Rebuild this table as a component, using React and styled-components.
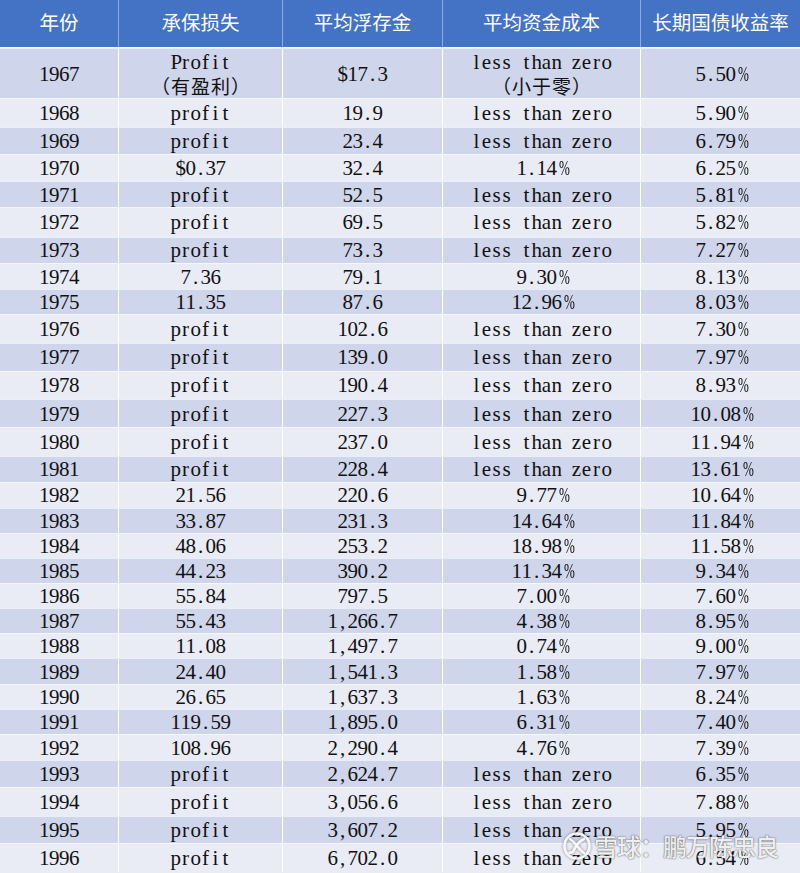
import React from 'react'
import styled, { createGlobalStyle } from 'styled-components';

const GlobalStyle = createGlobalStyle`
  * { box-sizing: border-box; }
  body {
    margin: 0;
    background: #e9ebf5;
    font-family: "Liberation Serif", "Times New Roman", serif;
  }
`;

const COLS = '118px 164px 160px 198px 160px';

const Table = styled.div`
  position: relative;
  width: 800px;
  height: 873px;
  overflow: hidden;
`;

const HeadRow = styled.div`
  display: grid;
  grid-template-columns: ${COLS};
  height: 48px;
  background: #4472c4;
  border-bottom: 1.5px solid #ffffff;
`;

const HeadCell = styled.div`
  display: flex;
  align-items: center;
  justify-content: center;
  padding-bottom: 5px;
  color: #ffffff;
  font-family: "Noto Sans CJK SC", sans-serif;
  font-size: 19.5px;
  border-left: ${p => (p.$first ? 'none' : '1px solid #8fa9dc')};
`;

const Row = styled.div`
  display: grid;
  grid-template-columns: ${COLS};
  height: ${p => p.$h}px;
  background: ${p => (p.$dark ? '#cfd5ea' : '#e9ebf5')};
  border-top: 1px solid rgba(255, 255, 255, 0.6);
`;

const Cell = styled.div`
  display: flex;
  flex-direction: column;
  align-items: center;
  justify-content: center;
  color: #111111;
  border-left: ${p => (p.$first ? 'none' : '1px solid #ffffff')};
`;

const Line = styled.div`
  height: 24px;
  line-height: 24px;
  white-space: nowrap;
  font-family: "Liberation Serif", "Times New Roman", serif;
  font-size: 21px;
`;

// SimSun-style half width cell for latin characters
const Half = styled.span`
  display: inline-block;
  width: 10px;
  text-align: center;
  white-space: pre;
  font-family: "Liberation Serif", "Times New Roman", serif;
  transform: ${p => (p.$squeeze ? 'scaleX(0.62)' : 'none')};
`;

const Full = styled.span`
  display: inline-block;
  width: 20px;
  line-height: 24px;
  text-align: center;
  font-family: "Noto Sans CJK SC", sans-serif;
  font-size: 19px;
`;

const Watermark = styled.div`
  position: absolute;
  right: 22px;
  bottom: 12px;
  display: flex;
  align-items: center;
  gap: 2px;
  height: 30px;
  line-height: 28px;
  color: rgba(255, 255, 255, 0.92);
  font-family: "Noto Sans CJK SC", sans-serif;
  font-size: 24px;
  font-weight: 500;
  letter-spacing: -1px;
  text-shadow: 0 0 2px rgba(60, 60, 60, 0.6), 0 0 1px rgba(60, 60, 60, 0.7);

  & svg {
    filter: drop-shadow(0 0 1.5px rgba(60, 60, 60, 0.6));
  }
`;

const LTZ = 'less than zero';

const headers = ['年份', '承保损失', '平均浮存金', '平均资金成本', '长期国债收益率'];

const rows = [
  ['1967', 'Profit\n（有盈利）', '$17.3', LTZ + '\n（小于零）', '5.50%', 50],
  ['1968', 'profit', '19.9', LTZ, '5.90%', 28.5],
  ['1969', 'profit', '23.4', LTZ, '6.79%', 27.5],
  ['1970', '$0.37', '32.4', '1.14%', '6.25%', 27],
  ['1971', 'profit', '52.5', LTZ, '5.81%', 26],
  ['1972', 'profit', '69.5', LTZ, '5.82%', 29.5],
  ['1973', 'profit', '73.3', LTZ, '7.27%', 26.5],
  ['1974', '7.36', '79.1', '9.30%', '8.13%', 26],
  ['1975', '11.35', '87.6', '12.96%', '8.03%', 25],
  ['1976', 'profit', '102.6', LTZ, '7.30%', 28.5],
  ['1977', 'profit', '139.0', LTZ, '7.97%', 28.25],
  ['1978', 'profit', '190.4', LTZ, '8.93%', 28.25],
  ['1979', 'profit', '227.3', LTZ, '10.08%', 28.25],
  ['1980', 'profit', '237.0', LTZ, '11.94%', 28.25],
  ['1981', 'profit', '228.4', LTZ, '13.61%', 26],
  ['1982', '21.56', '220.6', '9.77%', '10.64%', 26],
  ['1983', '33.87', '231.3', '14.64%', '11.84%', 25],
  ['1984', '48.06', '253.2', '18.98%', '11.58%', 25],
  ['1985', '44.23', '390.2', '11.34%', '9.34%', 25.7],
  ['1986', '55.84', '797.5', '7.00%', '7.60%', 25.3],
  ['1987', '55.43', '1,266.7', '4.38%', '8.95%', 24.7],
  ['1988', '11.08', '1,497.7', '0.74%', '9.00%', 25.3],
  ['1989', '24.40', '1,541.3', '1.58%', '7.97%', 25.7],
  ['1990', '26.65', '1,637.3', '1.63%', '8.24%', 25],
  ['1991', '119.59', '1,895.0', '6.31%', '7.40%', 25],
  ['1992', '108.96', '2,290.4', '4.76%', '7.39%', 25.7],
  ['1993', 'profit', '2,624.7', LTZ, '6.35%', 27],
  ['1994', 'profit', '3,056.6', LTZ, '7.88%', 29],
  ['1995', 'profit', '3,607.2', LTZ, '5.95%', 27.3],
  ['1996', 'profit', '6,702.0', LTZ, '6.54%', 29],
];

function CellText({ text }) {
  return text.split('\n').map((line, i) => (
    <Line key={i}>
      {Array.from(line).map((ch, j) =>
        ch.charCodeAt(0) > 0x2e80
          ? <Full key={j}>{ch}</Full>
          : <Half key={j} $squeeze={ch === '%'}>{ch}</Half>
      )}
    </Line>
  ));
}

function SnowballLogo() {
  return (
    <svg width="30" height="30" viewBox="0 0 30 30" fill="none" stroke="rgba(255,255,255,0.92)" strokeWidth="2.6" strokeLinecap="round">
      <circle cx="15" cy="15" r="12.5" />
      <path d="M8 8 C13 11 17 19 22 22" />
      <path d="M22 8 C18 10 14 14 12 19 C11 21 9 22 7.5 21.5" />
    </svg>
  );
}

export default function App() {
  return (
    <>
      <GlobalStyle />
      <Table>
        <HeadRow>
          {headers.map((h, i) => (
            <HeadCell key={h} $first={i === 0}>{h}</HeadCell>
          ))}
        </HeadRow>
        {rows.map((r, i) => (
          <Row key={r[0]} $h={r[5]} $dark={i % 2 === 0}>
            {r.slice(0, 5).map((c, j) => (
              <Cell key={j} $first={j === 0}>
                <CellText text={c} />
              </Cell>
            ))}
          </Row>
        ))}
        <Watermark>
          <SnowballLogo />
          <span>雪球：鹏万陈忠良</span>
        </Watermark>
      </Table>
    </>
  )
}
